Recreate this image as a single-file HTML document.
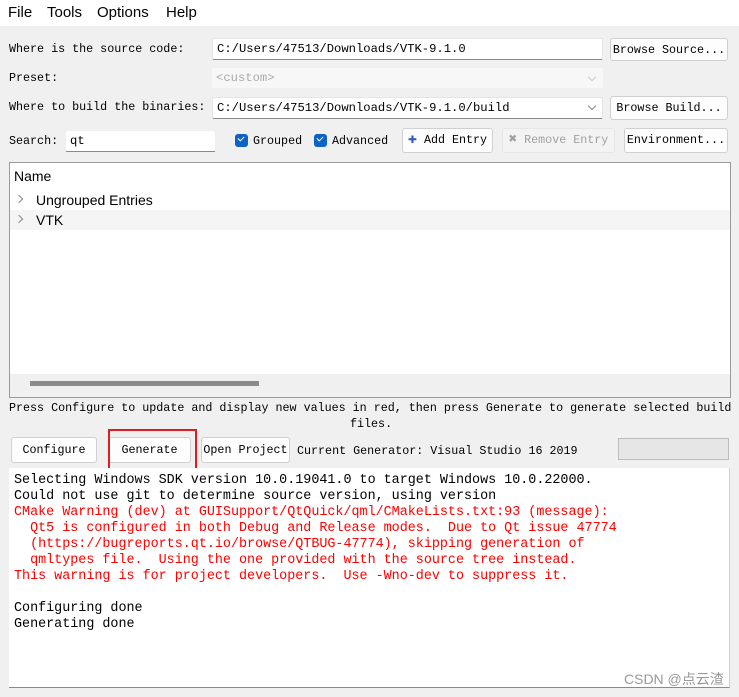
<!DOCTYPE html>
<html><head><meta charset="utf-8"><style>
*{box-sizing:border-box;margin:0;padding:0}
body{width:739px;height:697px;background:#f0f0f0;position:relative;overflow:hidden;font-family:"Liberation Mono",monospace;font-size:11.7px;color:#000}
.a{position:absolute;white-space:pre}
.menu{position:absolute;left:0;top:0;width:739px;height:26px;background:#fff;font-family:"Liberation Sans",sans-serif;font-size:15px}
.inp{position:absolute;background:#fff;border:1px solid #e5e5e5;border-bottom:1px solid #8a8a8a;border-radius:2px;padding-left:4px;line-height:20px;font-size:12.2px}
.btn{position:absolute;background:#fdfdfd;border:1px solid #d0d0d0;border-radius:3px;text-align:center;line-height:22px;font-size:11.7px}
.cb{position:absolute;width:13px;height:13px;background:#0f62c4;border-radius:3px}
.cb:after{content:"";position:absolute;left:3px;top:2px;width:5px;height:3px;border-left:1.5px solid #fff;border-bottom:1.5px solid #fff;transform:rotate(-45deg)}
.chev{position:absolute;width:6px;height:6px;border-right:1px solid #888;border-bottom:1px solid #888;transform:rotate(45deg)}
.out{font-size:13.4px;line-height:16px}
.r{color:#f00}
</style></head><body>
<div class="menu">
<span class="a" style="left:8px;top:4px">File</span>
<span class="a" style="left:47px;top:4px">Tools</span>
<span class="a" style="left:97px;top:4px">Options</span>
<span class="a" style="left:166px;top:4px">Help</span>
</div>

<span class="a" style="left:9px;top:42px">Where is the source code:</span>
<div class="inp" style="left:212px;top:38px;width:391px;height:22px">C:/Users/47513/Downloads/VTK-9.1.0</div>
<div class="btn" style="left:610px;top:38px;width:118px;height:23px">Browse Source...</div>

<span class="a" style="left:9px;top:71px">Preset:</span>
<div class="inp" style="left:212px;top:68px;width:391px;height:20px;border:none;background:#f7f7f7;color:#aaa;line-height:20px">&lt;custom&gt;</div>
<div class="chev" style="left:589px;top:74px;border-color:#ccc"></div>

<span class="a" style="left:9px;top:100px">Where to build the binaries:</span>
<div class="inp" style="left:212px;top:97px;width:391px;height:22px">C:/Users/47513/Downloads/VTK-9.1.0/build</div>
<div class="chev" style="left:589px;top:103px"></div>
<div class="btn" style="left:610px;top:96px;width:118px;height:24px">Browse Build...</div>

<span class="a" style="left:9px;top:134px">Search:</span>
<div class="inp" style="left:65px;top:130px;width:151px;height:22px;border-color:#eee #eee #8a8a8a">qt</div>
<div class="cb" style="left:235px;top:134px"></div>
<span class="a" style="left:253px;top:134px">Grouped</span>
<div class="cb" style="left:314px;top:134px"></div>
<span class="a" style="left:332px;top:134px">Advanced</span>
<div class="btn" style="left:402px;top:128px;width:91px;height:25px"><span style="color:#2a5bc0;font-weight:bold;font-size:15px">✚</span> Add Entry</div>
<div class="btn" style="left:502px;top:128px;width:113px;height:25px;background:#f3f3f3;border-color:#e6e6e6;color:#a0a0a0"><span style="font-size:14px">✖</span> Remove Entry</div>
<div class="btn" style="left:624px;top:128px;width:104px;height:25px">Environment...</div>

<div style="position:absolute;left:9px;top:162px;width:722px;height:236px;background:#fff;border:1px solid #9a9a9a;font-family:'Liberation Sans',sans-serif;font-size:14px">
<span class="a" style="left:4px;top:5px">Name</span>
<div class="chev" style="left:6px;top:33px;transform:rotate(-45deg)"></div>
<span class="a" style="left:26px;top:29px">Ungrouped Entries</span>
<div style="position:absolute;left:0;top:47px;width:720px;height:20px;background:#f5f5f5"></div>
<div class="chev" style="left:6px;top:53px;transform:rotate(-45deg)"></div>
<span class="a" style="left:26px;top:49px">VTK</span>
<div style="position:absolute;left:0;top:211px;width:720px;height:23px;background:#f0f0f0"></div>
<div style="position:absolute;left:20px;top:218px;width:229px;height:5px;background:#8b8b8b"></div>
</div>

<span class="a" style="left:9px;top:401px;width:722px">Press Configure to update and display new values in red, then press Generate to generate selected build</span>
<span class="a" style="left:350px;top:417px">files.</span>

<div class="btn" style="left:11px;top:437px;width:86px;height:26px;line-height:24px">Configure</div>
<div class="btn" style="left:108px;top:437px;width:83px;height:26px;line-height:24px">Generate</div>
<div class="btn" style="left:201px;top:437px;width:89px;height:26px;line-height:24px">Open Project</div>
<span class="a" style="left:297px;top:444px">Current Generator: Visual Studio 16 2019</span>
<div style="position:absolute;left:618px;top:438px;width:111px;height:22px;background:#e6e6e6;border:1px solid #bcbcbc"></div>
<div style="position:absolute;left:108px;top:429px;width:89px;height:42px;border:2px solid #e01b24"></div>

<div style="position:absolute;left:9px;top:468px;width:721px;height:220px;background:#fff;border-bottom:1px solid #8a8a8a;border-right:1px solid #d0d0d0">
<div class="a out" style="left:5px;top:5px">Selecting Windows SDK version 10.0.19041.0 to target Windows 10.0.22000.
Could not use git to determine source version, using version
<span class="r">CMake Warning (dev) at GUISupport/QtQuick/qml/CMakeLists.txt:93 (message):
  Qt5 is configured in both Debug and Release modes.  Due to Qt issue 47774
  (https://bugreports.qt.io/browse/QTBUG-47774), skipping generation of
  qmltypes file.  Using the one provided with the source tree instead.
This warning is for project developers.  Use -Wno-dev to suppress it.</span>

Configuring done
Generating done</div>
<span class="a" style="left:615px;top:201px;font-family:'Liberation Sans','Noto Sans CJK SC',sans-serif;font-size:14px;color:#999">CSDN @点云渣</span>
</div>
</body></html>
